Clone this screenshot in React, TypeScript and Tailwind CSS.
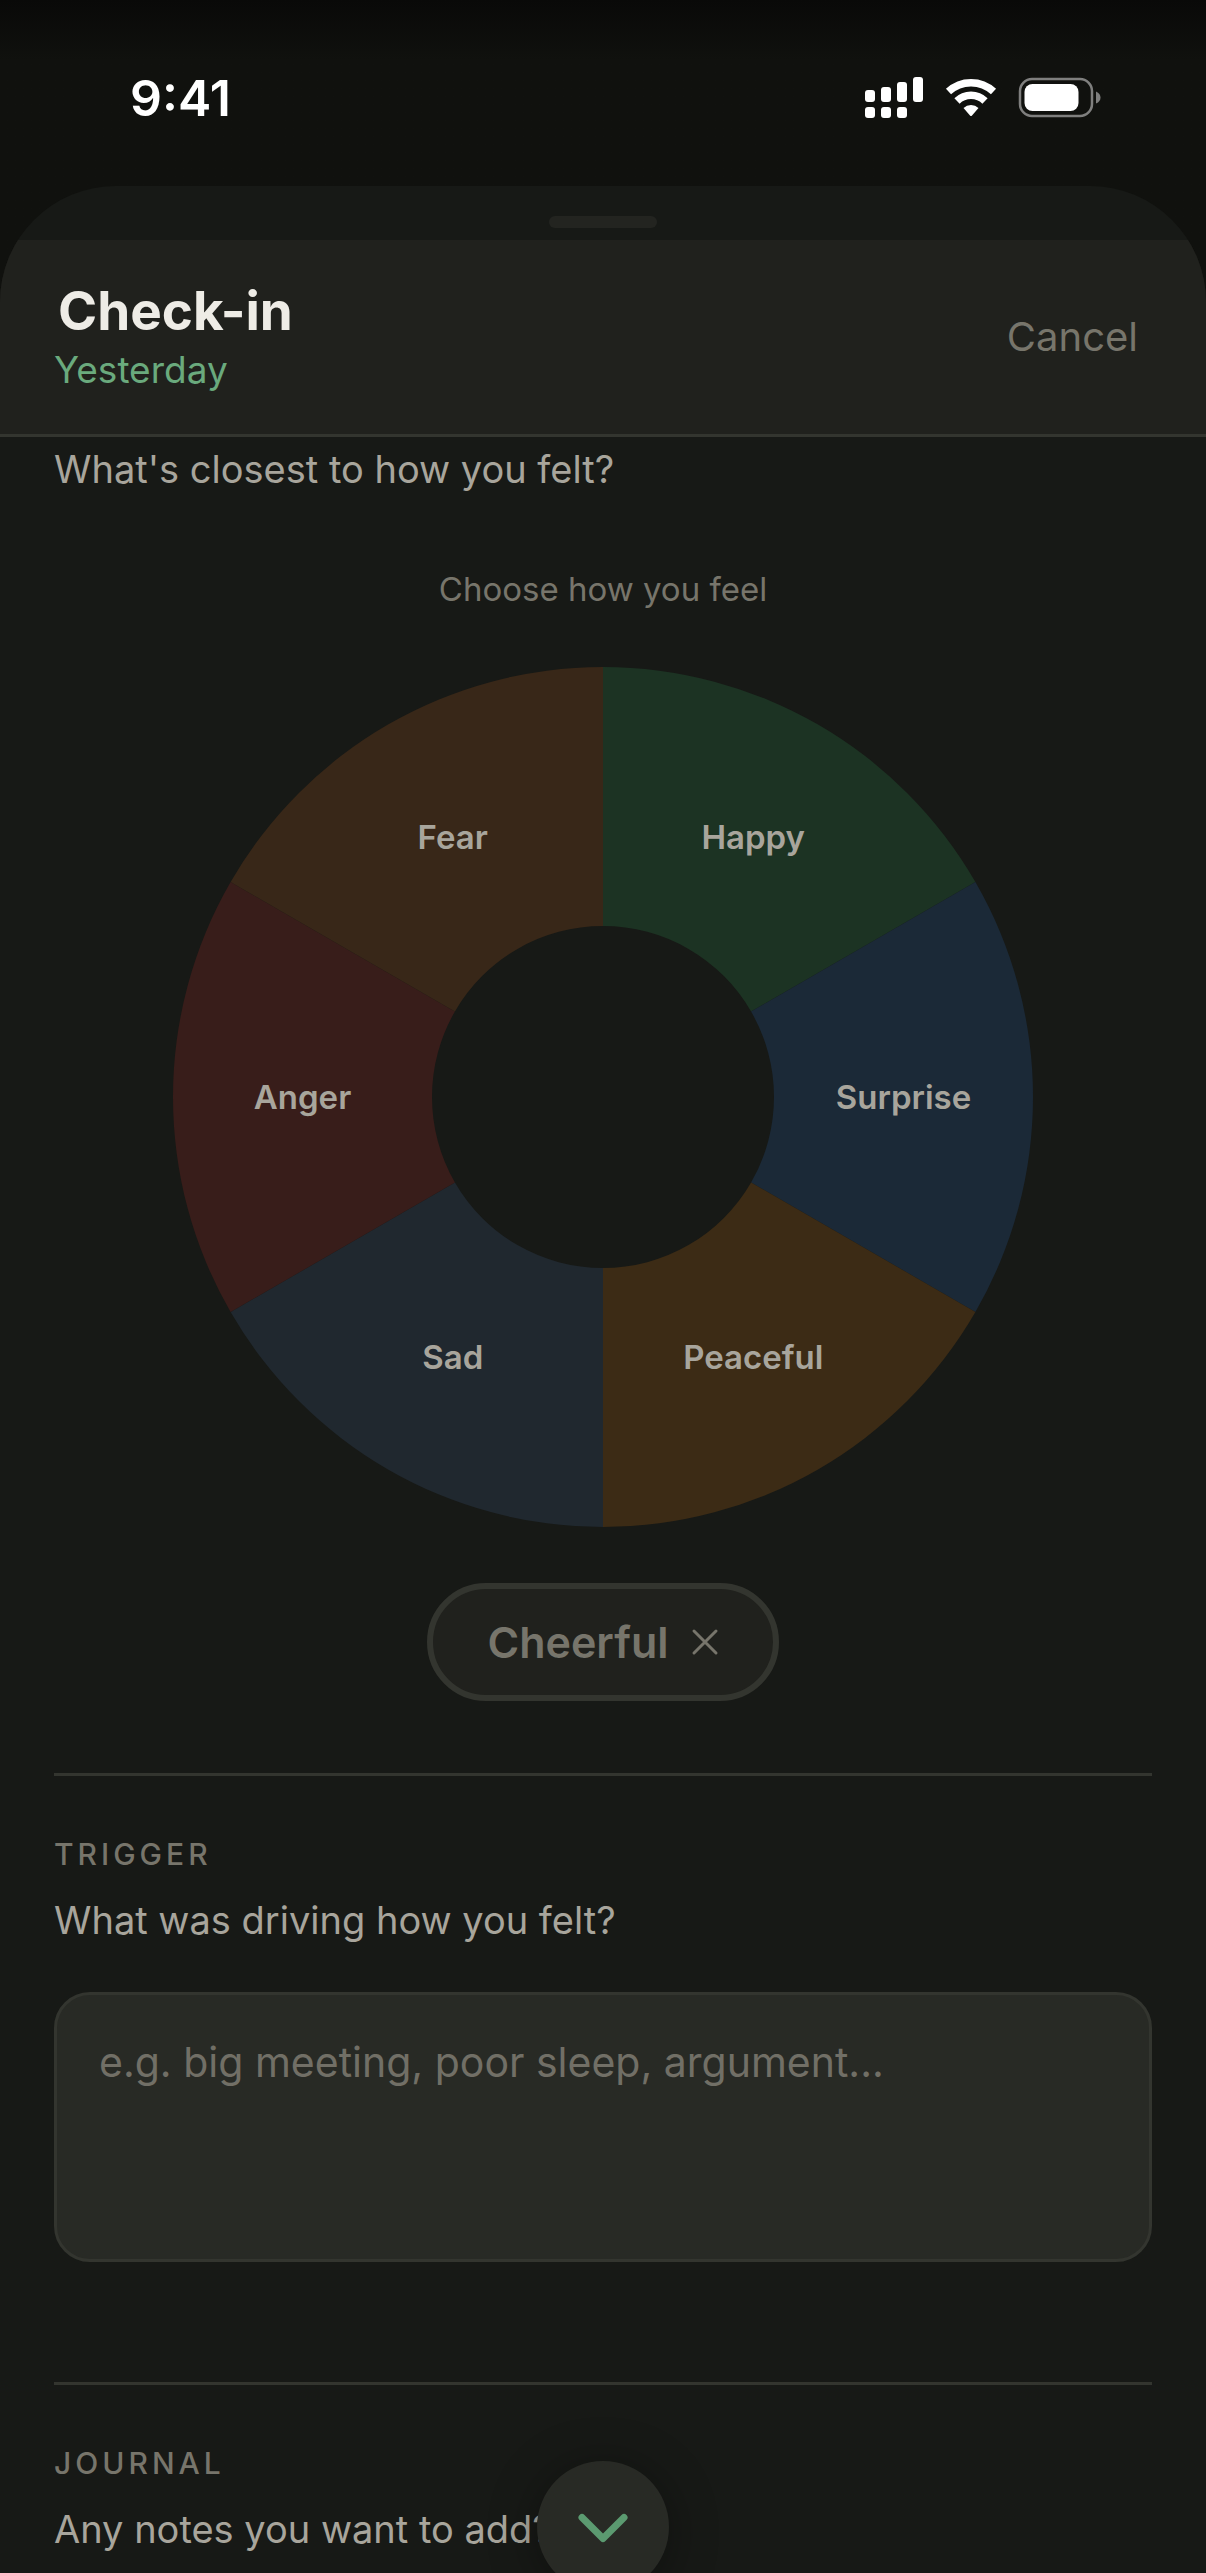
import { useState } from 'react'

interface Emotion {
  name: string
  color: string
}

const emotions: Emotion[] = [
  { name: 'Happy', color: '#1c3323' },
  { name: 'Surprise', color: '#1b2937' },
  { name: 'Peaceful', color: '#3c2b15' },
  { name: 'Sad', color: '#20282f' },
  { name: 'Anger', color: '#381d1a' },
  { name: 'Fear', color: '#382718' },
]

const OUTER = 430
const INNER = 171

function point(radius: number, degrees: number) {
  const rad = ((degrees - 90) * Math.PI) / 180
  return { x: OUTER + radius * Math.cos(rad), y: OUTER + radius * Math.sin(rad) }
}

function slicePath(index: number) {
  const a = point(OUTER, index * 60)
  const b = point(OUTER, index * 60 + 60)
  const c = point(INNER, index * 60 + 60)
  const d = point(INNER, index * 60)
  return `M${a.x} ${a.y} A${OUTER} ${OUTER} 0 0 1 ${b.x} ${b.y} L${c.x} ${c.y} A${INNER} ${INNER} 0 0 0 ${d.x} ${d.y} Z`
}

function StatusBar() {
  return (
    <div className="flex h-[186px] shrink-0 items-center justify-between pt-2.5 pr-[104px] pl-[130px]">
      <span className="text-[50px] leading-[60px] font-semibold text-white">9:41</span>
      <div className="flex items-center gap-[21px]">
        <svg width="60" height="48" viewBox="0 0 60 48" fill="#fff" aria-hidden="true">
          <rect x="1" y="16" width="10" height="12" rx="3" />
          <rect x="17" y="13" width="10" height="15" rx="3" />
          <rect x="33" y="8" width="10" height="20" rx="3" />
          <rect x="49" y="3" width="10" height="25" rx="3" />
          <rect x="1" y="33" width="10" height="11" rx="3" />
          <rect x="17" y="33" width="10" height="11" rx="3" />
          <rect x="33" y="33" width="10" height="11" rx="3" />
        </svg>
        <svg width="52" height="48" viewBox="0 0 52 48" aria-hidden="true">
          <path d="M3.500 17.500 A33 33 0 0 1 48.500 17.500" fill="none" stroke="#fff" strokeWidth="7.500" />
          <path d="M12 27 A20 20 0 0 1 40 27" fill="none" stroke="#fff" strokeWidth="7.500" />
          <path d="M18.500 34 A11 11 0 0 1 33.500 34 L27 41.500 Q26 42.500 25 41.500 Z" fill="#fff" />
        </svg>
        <svg width="84" height="48" viewBox="0 0 84 48" aria-hidden="true">
          <rect x="2" y="5" width="72" height="37" rx="12" fill="none" stroke="#7f7f7e" strokeWidth="2.500" />
          <rect x="6.500" y="10" width="54" height="27" rx="8" fill="#fff" />
          <path d="M78 17.500 Q82.500 19.500 82.500 23.500 Q82.500 27.500 78 29.500 Z" fill="#7f7f7e" />
        </svg>
      </div>
    </div>
  )
}

function SheetHeader() {
  return (
    <header className="flex h-[197px] shrink-0 items-center justify-between border-b-3 border-[#33352f] bg-[#20211d] pr-[68px] pl-[54px]">
      <div>
        <h1 className="pl-1 text-[53px] leading-[66px] font-bold text-[#eeece6]">Check-in</h1>
        <p className="text-[37px] leading-[52px] text-[#6aaa7d]">Yesterday</p>
      </div>
      <button type="button" className="text-[40px] leading-[48px] text-[#77756b]">
        Cancel
      </button>
    </header>
  )
}

function EmotionWheel({ onSelect }: { onSelect: (name: string) => void }) {
  return (
    <div className="relative mx-auto aspect-square w-full max-w-[860px]">
      <svg viewBox="0 0 860 860" className="block w-full" aria-hidden="true">
        {emotions.map((emotion, i) => (
          <path key={emotion.name} d={slicePath(i)} fill={emotion.color} />
        ))}
      </svg>
      {emotions.map((emotion, i) => {
        const center = point((OUTER + INNER) / 2, i * 60 + 30)
        return (
          <button
            key={emotion.name}
            type="button"
            onClick={() => onSelect(emotion.name)}
            className="absolute -translate-1/2 text-[33px] leading-[40px] font-semibold text-[#a8a59c]"
            style={{ left: `${(center.x / 860) * 100}%`, top: `${(center.y / 860) * 100}%` }}
          >
            {emotion.name}
          </button>
        )
      })}
    </div>
  )
}

export default function App() {
  const [feeling, setFeeling] = useState('Cheerful')
  const [trigger, setTrigger] = useState('')

  return (
    <div className="relative flex h-screen flex-col overflow-hidden bg-linear-to-b from-[#090908] to-[#10110e] to-[60px] font-['Inter',sans-serif]">
      <StatusBar />

      <main className="flex min-h-0 flex-1 flex-col overflow-hidden rounded-t-[116px] bg-[#171916]">
        <div className="flex h-[54px] shrink-0 items-end justify-center pb-3">
          <div className="h-3 w-[108px] rounded-full bg-[#232420]" />
        </div>
        <SheetHeader />

        <div className="min-h-0 flex-1 overflow-hidden px-[54px] pt-2">
          <section>
            <h2 className="text-[38px] leading-[48px] text-[#a8a59c]">What's closest to how you felt?</h2>
            <p className="mt-19 mb-[58px] text-center text-[33px] leading-[40px] text-[#77756b]">
              Choose how you feel
            </p>
            <EmotionWheel onSelect={setFeeling} />
            <div className="mt-14 flex h-[118px] justify-center">
              {feeling && (
                <button
                  type="button"
                  onClick={() => setFeeling('')}
                  className="flex items-center gap-[22px] rounded-full border-6 border-[#33352f] bg-[#20211d] px-[54px] text-[43px] leading-[48px] font-semibold text-[#77756b]"
                >
                  {feeling}
                  <svg width="28" height="28" viewBox="0 0 28 28" stroke="#77756b" strokeWidth="3" strokeLinecap="round" aria-hidden="true">
                    <path d="M3 3 L25 25 M25 3 L3 25" />
                  </svg>
                </button>
              )}
            </div>
          </section>

          <section className="mt-[72px] border-t-3 border-[#33352f] pt-[60px]">
            <h3 className="text-[30px] leading-[36px] font-medium tracking-[4px] text-[#77756b]">TRIGGER</h3>
            <label htmlFor="trigger" className="mt-6 block text-[38px] leading-[48px] text-[#a8a59c]">
              What was driving how you felt?
            </label>
            <textarea
              id="trigger"
              value={trigger}
              onChange={e => setTrigger(e.target.value)}
              placeholder="e.g. big meeting, poor sleep, argument..."
              className="mt-12 block h-[270px] w-full resize-none rounded-[36px] border-3 border-[#33352f] bg-[#282a25] px-[42px] py-10 text-[41px] leading-[54px] text-[#a8a59c] placeholder:text-[#716f66]"
            />
          </section>

          <section className="mt-[120px] border-t-3 border-[#33352f] pt-[60px]">
            <h3 className="text-[30px] leading-[36px] font-medium tracking-[4px] text-[#77756b]">JOURNAL</h3>
            <p className="mt-6 text-[38px] leading-[48px] text-[#a8a59c]">Any notes you want to add?</p>
          </section>
        </div>
      </main>

      <button
        type="button"
        aria-label="Scroll down"
        className="absolute -bottom-5 left-1/2 flex size-[132px] -translate-x-1/2 items-center justify-center rounded-full bg-[#282a25] shadow-[0_6px_48px_rgba(0,0,0,0.35)]"
      >
        <svg width="60" height="60" viewBox="0 0 60 60" fill="none" stroke="#5b9a70" strokeWidth="7" strokeLinecap="round" strokeLinejoin="round" aria-hidden="true">
          <path d="M9 20.500 L30 41.500 L51 20.500" />
        </svg>
      </button>
    </div>
  )
}
